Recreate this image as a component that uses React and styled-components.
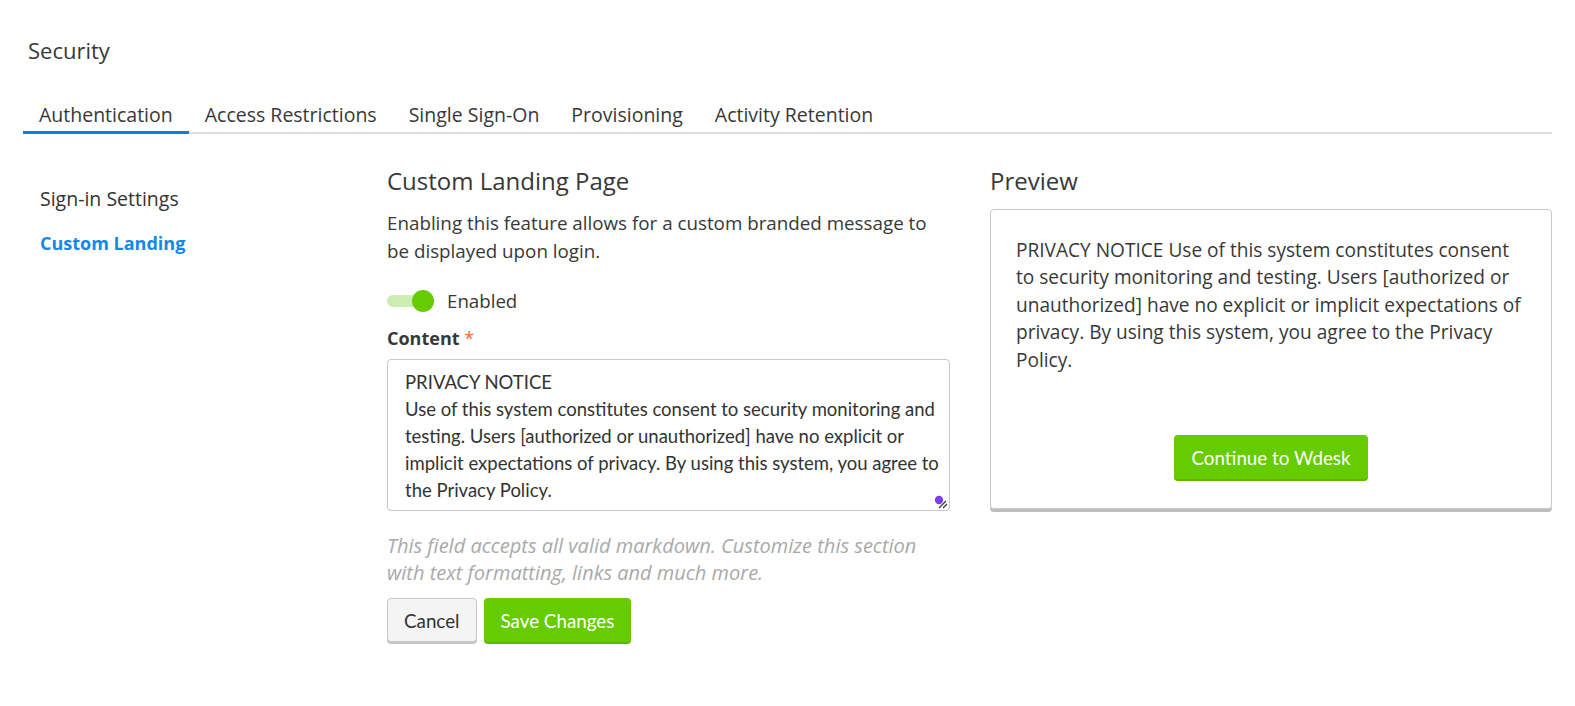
import React, { useState } from "react";
import styled, { createGlobalStyle } from "styled-components";

const GlobalStyle = createGlobalStyle`
  * { box-sizing: border-box; }
  body {
    margin: 0;
    background: #fff;
    font-family: "Open Sans", "Liberation Sans", sans-serif;
    color: #383838;
  }
`;

const TABS = [
  "Authentication",
  "Access Restrictions",
  "Single Sign-On",
  "Provisioning",
  "Activity Retention",
];

const NOTICE =
  "PRIVACY NOTICE\nUse of this system constitutes consent to security monitoring and testing. Users [authorized or unauthorized] have no explicit or implicit expectations of privacy. By using this system, you agree to the Privacy Policy.";

const App = () => {
  const [tab, setTab] = useState(0);
  const [enabled, setEnabled] = useState(true);
  const [content, setContent] = useState(NOTICE);

  return (
    <Page>
      <GlobalStyle />
      <Title>Security</Title>
      <TabBar>
        {TABS.map((t, i) => (
          <Tab key={t} active={i === tab} onClick={() => setTab(i)}>
            {t}
          </Tab>
        ))}
      </TabBar>
      <Body>
        <SideNav>
          <NavItem>Sign-in Settings</NavItem>
          <NavItem active>Custom Landing</NavItem>
        </SideNav>
        <FormCol>
          <Heading>Custom Landing Page</Heading>
          <Desc>
            Enabling this feature allows for a custom branded message to be
            displayed upon login.
          </Desc>
          <ToggleRow onClick={() => setEnabled(!enabled)}>
            <Track on={enabled}>
              <Knob on={enabled} />
            </Track>
            <span>{enabled ? "Enabled" : "Disabled"}</span>
          </ToggleRow>
          <Label>
            Content <Req>*</Req>
          </Label>
          <TextBox>
            <TextArea
              value={content}
              onChange={(e) => setContent(e.target.value)}
            />
            <Grip>
              <svg width="14" height="14" viewBox="0 0 14 14">
                <circle cx="5" cy="5" r="4.2" fill="#7b3ff2" />
                <path d="M5 13 L12 6 M9 13 L13 9" stroke="#333" strokeWidth="1.2" />
              </svg>
            </Grip>
          </TextBox>
          <Help>
            This field accepts all valid markdown. Customize this section
            <br />
            with text formatting, links and much more.
          </Help>
          <Actions>
            <GrayButton>Cancel</GrayButton>
            <GreenButton>Save Changes</GreenButton>
          </Actions>
        </FormCol>
        <PreviewCol>
          <Heading>Preview</Heading>
          <Card>
            <CardText>{content.replace(/\n/g, " ")}</CardText>
            <CardFoot>
              <GreenButton>Continue to Wdesk</GreenButton>
            </CardFoot>
          </Card>
        </PreviewCol>
      </Body>
    </Page>
  );
};

const Page = styled.div`
  padding: 36px 23px 40px 23px;
`;

const Title = styled.div`
  font-size: 22px;
  line-height: 28px;
  padding-left: 5px;
  margin-bottom: 39px;
`;

const TabBar = styled.div`
  display: flex;
  border-bottom: 2px solid #dfdfdf;
`;

const Tab = styled.div`
  font-size: 19.5px;
  line-height: 24px;
  padding: 0 16px 4px;
  margin-bottom: -2px;
  cursor: pointer;
  border-bottom: 3px solid ${(p) => (p.active ? "#0b7fdb" : "transparent")};
`;

const Body = styled.div`
  display: flex;
  padding-top: 32px;
`;

const SideNav = styled.div`
  width: 364px;
  flex-shrink: 0;
  padding-left: 17px;
  padding-top: 21px;
  display: flex;
  flex-direction: column;
  gap: 20px;
`;

const NavItem = styled.div`
  font-size: ${(p) => (p.active ? "18px" : "19.5px")};
  line-height: 24px;
  font-weight: ${(p) => (p.active ? 700 : 400)};
  color: ${(p) => (p.active ? "#1487e8" : "#333")};
`;

const FormCol = styled.div`
  width: 563px;
  flex-shrink: 0;
`;

const Heading = styled.div`
  font-size: 24px;
  line-height: 30px;
  margin-bottom: 13px;
`;

const Desc = styled.div`
  max-width: 550px;
  font-size: 18.8px;
  line-height: 28px;
  margin-bottom: 24px;
`;

const ToggleRow = styled.div`
  display: flex;
  align-items: center;
  gap: 13px;
  font-size: 18.7px;
  line-height: 24px;
  cursor: pointer;
  margin-bottom: 13px;
`;

const Track = styled.div`
  position: relative;
  width: 47px;
  height: 22px;
  display: flex;
  align-items: center;
  &::before {
    content: "";
    width: 38px;
    height: 12px;
    border-radius: 6px;
    background: ${(p) => (p.on ? "#cdeeb2" : "#ddd")};
  }
`;

const Knob = styled.div`
  position: absolute;
  top: 0;
  left: ${(p) => (p.on ? "25px" : "0")};
  width: 22px;
  height: 22px;
  border-radius: 50%;
  background: ${(p) => (p.on ? "#66cc00" : "#fff")};
`;

const Label = styled.div`
  font-size: 18px;
  line-height: 24px;
  font-weight: 700;
  margin-bottom: 9px;
`;

const Req = styled.span`
  color: #f06a3a;
  font-weight: 400;
`;

const TextBox = styled.div`
  position: relative;
`;

const TextArea = styled.textarea`
  display: block;
  width: 100%;
  height: 152px;
  resize: none;
  border: 1px solid #c8c8c8;
  border-radius: 4px;
  padding: 9px 2px 8px 17px;
  font-family: Lato, sans-serif;
  font-size: 18.5px;
  line-height: 27px;
  color: #333;
  outline: none;
  overflow: hidden;
`;

const Grip = styled.div`
  position: absolute;
  right: 2px;
  bottom: 2px;
  line-height: 0;
`;

const Help = styled.div`
  font-size: 20px;
  font-style: italic;
  color: #a9a9a9;
  line-height: 27px;
  margin: 21px 0 12px;
`;

const Actions = styled.div`
  display: flex;
  gap: 7px;
`;

const BaseButton = styled.button`
  font-family: Lato, sans-serif;
  font-size: 18.8px;
  height: 44px;
  border-radius: 4px;
  padding: 0 17px;
  cursor: pointer;
`;

const GrayButton = styled(BaseButton)`
  background: #f4f4f4;
  color: #333;
  border: 1px solid #c8c8c8;
  box-shadow: 0 2px 0 #c6c6c6;
  padding: 0 16px;
`;

const GreenButton = styled(BaseButton)`
  background: #66cc00;
  color: #fff;
  border: none;
  box-shadow: 0 2px 0 #5bb800;
`;

const PreviewCol = styled.div`
  flex: 1;
  margin-left: 40px;
`;

const Card = styled.div`
  height: 300px;
  margin-top: 2px;
  border: 1px solid #c8c8c8;
  border-radius: 4px;
  box-shadow: 0 3px 0 #bdbdbd;
  padding: 27px 25px 29px;
  display: flex;
  flex-direction: column;
`;

const CardText = styled.div`
  font-size: 19.1px;
  line-height: 27.4px;
`;

const CardFoot = styled.div`
  margin-top: auto;
  display: flex;
  justify-content: center;
`;

export default App;
